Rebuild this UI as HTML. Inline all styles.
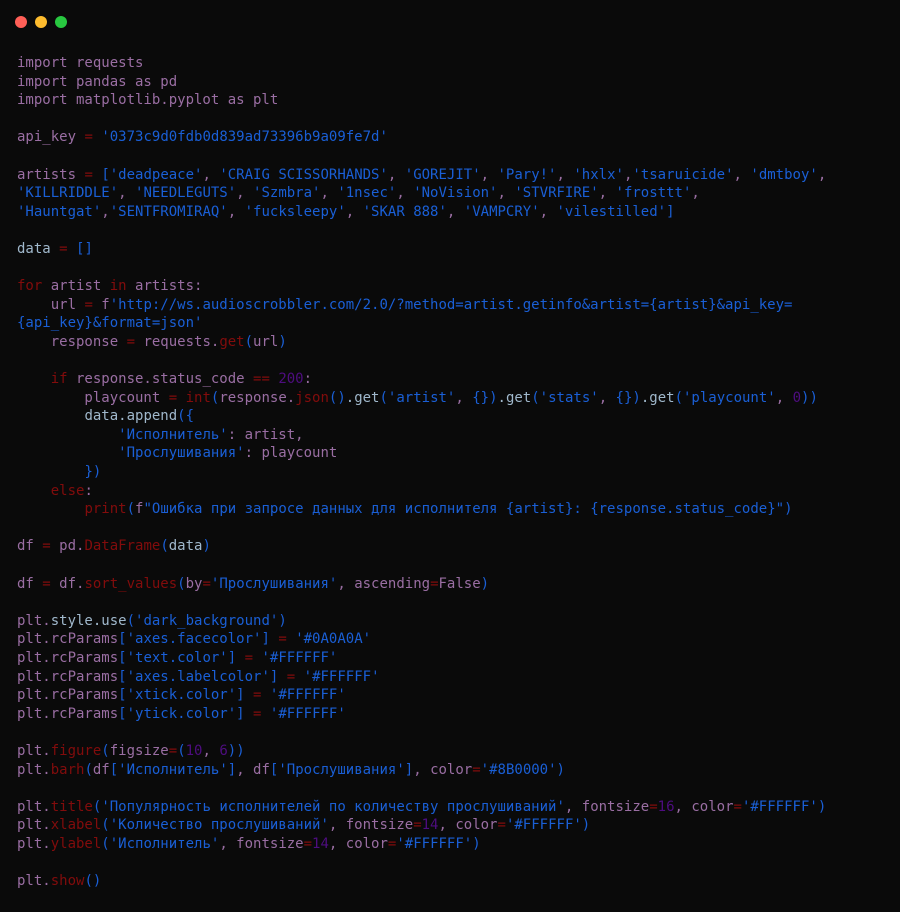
<!DOCTYPE html>
<html><head><meta charset="utf-8"><style>
html,body{margin:0;padding:0;background:#0a0a0a;width:900px;height:912px;overflow:hidden}
.d{position:absolute;top:16px;width:12px;height:12px;border-radius:50%}
pre{position:absolute;left:17px;top:54px;margin:0;font-family:"DejaVu Sans Mono","Liberation Mono",monospace;font-size:14px;line-height:18.6px;color:#9a6ea3;white-space:pre}
.s{color:#1a5fd6}.k{color:#820c0c}.n{color:#4e0d80}.l{color:#a0b8cc}
</style></head><body>
<div class="d" style="left:15px;background:#ff5f57"></div>
<div class="d" style="left:35px;background:#febc2e"></div>
<div class="d" style="left:55px;background:#28c840"></div>
<pre>import requests
import pandas as pd
import matplotlib.pyplot as plt

api_key <span class="k">=</span> <span class="s">'0373c9d0fdb0d839ad73396b9a09fe7d'</span>

artists <span class="k">=</span> <span class="s">[</span><span class="s">'deadpeace'</span>, <span class="s">'CRAIG SCISSORHANDS'</span>, <span class="s">'GOREJIT'</span>, <span class="s">'Pary!'</span>, <span class="s">'hxlx'</span>,<span class="s">'tsaruicide'</span>, <span class="s">'dmtboy'</span>,
<span class="s">'KILLRIDDLE'</span>, <span class="s">'NEEDLEGUTS'</span>, <span class="s">'Szmbra'</span>, <span class="s">'1nsec'</span>, <span class="s">'NoVision'</span>, <span class="s">'STVRFIRE'</span>, <span class="s">'frosttt'</span>,
<span class="s">'Hauntgat'</span>,<span class="s">'SENTFROMIRAQ'</span>, <span class="s">'fucksleepy'</span>, <span class="s">'SKAR 888'</span>, <span class="s">'VAMPCRY'</span>, <span class="s">'vilestilled'</span><span class="s">]</span>

<span class="l">data</span> <span class="k">=</span> <span class="s">[]</span>

<span class="k">for</span> artist <span class="k">in</span> artists:
    url <span class="k">=</span> f<span class="s">'http://ws.audioscrobbler.com/2.0/?method=artist.getinfo&amp;artist={artist}&amp;api_key=</span>
<span class="s">{api_key}&amp;format=json'</span>
    response <span class="k">=</span> requests.<span class="k">get</span><span class="s">(</span>url<span class="s">)</span>

    <span class="k">if</span> response.status_code <span class="k">==</span> <span class="n">200</span>:
        playcount <span class="k">=</span> <span class="k">int</span><span class="s">(</span>response.<span class="k">json</span><span class="s">()</span><span class="l">.get</span><span class="s">(</span><span class="s">'artist'</span>, <span class="s">{})</span><span class="l">.get</span><span class="s">(</span><span class="s">'stats'</span>, <span class="s">{})</span><span class="l">.get</span><span class="s">(</span><span class="s">'playcount'</span>, <span class="n">0</span><span class="s">))</span>
        <span class="l">data.append</span><span class="s">({</span>
            <span class="s">'Исполнитель'</span>: artist,
            <span class="s">'Прослушивания'</span>: playcount
        <span class="s">})</span>
    <span class="k">else</span>:
        <span class="k">print</span><span class="s">(</span>f<span class="s">"Ошибка при запросе данных для исполнителя {artist}: {response.status_code}"</span><span class="s">)</span>

df <span class="k">=</span> pd.<span class="k">DataFrame</span><span class="s">(</span><span class="l">data</span><span class="s">)</span>

df <span class="k">=</span> df.<span class="k">sort_values</span><span class="s">(</span>by<span class="k">=</span><span class="s">'Прослушивания'</span>, ascending<span class="k">=</span>False<span class="s">)</span>

plt.<span class="l">style.use</span><span class="s">(</span><span class="s">'dark_background'</span><span class="s">)</span>
plt.rcParams<span class="s">[</span><span class="s">'axes.facecolor'</span><span class="s">]</span> <span class="k">=</span> <span class="s">'#0A0A0A'</span>
plt.rcParams<span class="s">[</span><span class="s">'text.color'</span><span class="s">]</span> <span class="k">=</span> <span class="s">'#FFFFFF'</span>
plt.rcParams<span class="s">[</span><span class="s">'axes.labelcolor'</span><span class="s">]</span> <span class="k">=</span> <span class="s">'#FFFFFF'</span>
plt.rcParams<span class="s">[</span><span class="s">'xtick.color'</span><span class="s">]</span> <span class="k">=</span> <span class="s">'#FFFFFF'</span>
plt.rcParams<span class="s">[</span><span class="s">'ytick.color'</span><span class="s">]</span> <span class="k">=</span> <span class="s">'#FFFFFF'</span>

plt.<span class="k">figure</span><span class="s">(</span>figsize<span class="k">=</span><span class="s">(</span><span class="n">10</span>, <span class="n">6</span><span class="s">))</span>
plt.<span class="k">barh</span><span class="s">(</span>df<span class="s">[</span><span class="s">'Исполнитель'</span><span class="s">]</span>, df<span class="s">[</span><span class="s">'Прослушивания'</span><span class="s">]</span>, color<span class="k">=</span><span class="s">'#8B0000'</span><span class="s">)</span>

plt.<span class="k">title</span><span class="s">(</span><span class="s">'Популярность исполнителей по количеству прослушиваний'</span>, fontsize<span class="k">=</span><span class="n">16</span>, color<span class="k">=</span><span class="s">'#FFFFFF'</span><span class="s">)</span>
plt.<span class="k">xlabel</span><span class="s">(</span><span class="s">'Количество прослушиваний'</span>, fontsize<span class="k">=</span><span class="n">14</span>, color<span class="k">=</span><span class="s">'#FFFFFF'</span><span class="s">)</span>
plt.<span class="k">ylabel</span><span class="s">(</span><span class="s">'Исполнитель'</span>, fontsize<span class="k">=</span><span class="n">14</span>, color<span class="k">=</span><span class="s">'#FFFFFF'</span><span class="s">)</span>

plt.<span class="k">show</span><span class="s">()</span></pre>
</body></html>
